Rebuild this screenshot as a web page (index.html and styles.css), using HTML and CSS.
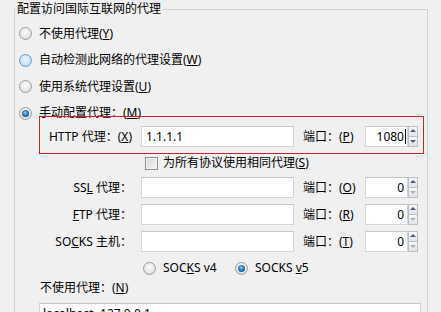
FILE: index.html
```html
<!DOCTYPE html>
<html lang="zh-CN">
<head>
    <meta charset="UTF-8">
    <title>连接设置</title>
    <link rel="stylesheet" href="styles.css">
</head>
<body>
    <fieldset class="group">
        <legend>配置访问国际互联网的代理</legend>

        <div class="modes">
            <label class="opt"><span class="radio"></span><span>不使用代理(<u>Y</u>)</span></label>
            <label class="opt"><span class="radio hot"></span><span>自动检测此网络的代理设置(<u>W</u>)</span></label>
            <label class="opt"><span class="radio"></span><span>使用系统代理设置(<u>U</u>)</span></label>
            <label class="opt"><span class="radio on"></span><span>手动配置代理：(<u>M</u>)</span></label>
        </div>

        <!-- 红框标出的 HTTP 代理 -->
        <div class="proxy-row marked">
            <label class="host-label">HTTP 代理：(<u>X</u>)</label>
            <input class="box host" type="text" value="1.1.1.1">
            <label class="port-label">端口：(<u>P</u>)</label>
            <div class="spin">
                <input class="box port" type="text" value="1080">
                <span class="caret"></span>
                <span class="arrows"><span class="up"></span><span class="down"></span></span>
            </div>
        </div>

        <label class="check-row"><span class="checkbox"></span><span>为所有协议使用相同代理(<u>S</u>)</span></label>

        <div class="servers">
            <div class="proxy-row">
                <label class="host-label">SS<u>L</u> 代理：</label>
                <input class="box host" type="text" value="">
                <label class="port-label">端口：(<u>O</u>)</label>
                <div class="spin">
                    <input class="box port" type="text" value="0">
                    <span class="arrows"><span class="up"></span><span class="down off"></span></span>
                </div>
            </div>
            <div class="proxy-row">
                <label class="host-label"><u>F</u>TP 代理：</label>
                <input class="box host" type="text" value="">
                <label class="port-label">端口：(<u>R</u>)</label>
                <div class="spin">
                    <input class="box port" type="text" value="0">
                    <span class="arrows"><span class="up"></span><span class="down off"></span></span>
                </div>
            </div>
            <div class="proxy-row">
                <label class="host-label">SO<u>C</u>KS 主机：</label>
                <input class="box host" type="text" value="">
                <label class="port-label">端口：(<u>T</u>)</label>
                <div class="spin">
                    <input class="box port" type="text" value="0">
                    <span class="arrows"><span class="up"></span><span class="down off"></span></span>
                </div>
            </div>
        </div>

        <div class="version-row">
            <label class="opt"><span class="radio"></span><span>SOC<u>K</u>S v4</span></label>
            <label class="opt"><span class="radio on"></span><span>SOCKS <u>v</u>5</span></label>
        </div>

        <label class="exceptions-label">不使用代理：(<u>N</u>)</label>
        <textarea class="box exceptions">localhost, 127.0.0.1</textarea>
    </fieldset>
</body>
</html>
```

FILE: styles.css
```css
html, body {
    height: 100%;
    overflow: hidden;
}

body {
    margin: 0;
    background-color: #f0f0f0;
    font-family: "Noto Sans", "Noto Sans CJK SC", sans-serif;
    font-size: 12px;
    line-height: 16px;
    color: #000;
}

.group {
    margin: 1px 0 0 14px;
    width: 414px;
    box-sizing: border-box;
    padding: 0 0 40px 1px;
    border: 1px solid #d3d3d3;
    min-inline-size: 0;
}

.group legend {
    padding: 0 1px;
    line-height: 16px;
}

/* 四个代理模式 */
.modes {
    display: grid;
    row-gap: 10.5px;
    margin: 8.5px 0 0 3px;
}

.opt {
    display: flex;
    align-items: center;
    gap: 7px;
    height: 16px;
    white-space: nowrap;
}

.radio {
    position: relative;
    flex: none;
    width: 13px;
    height: 13px;
    box-sizing: border-box;
    border-radius: 50%;
    border: 1px solid #9d9d9d;
    background: radial-gradient(circle at 50% 40%, #fdfdfd 0, #e8e8e8 55%, #cdcdcd 100%);
}

.radio.hot {
    border-color: #5b9ad1;
    background: radial-gradient(circle at 50% 40%, #f0f8fe 0, #c4e2f9 60%, #9dcdf2 100%);
}

.radio.on::after {
    content: "";
    position: absolute;
    left: 2px;
    top: 2px;
    width: 7px;
    height: 7px;
    border-radius: 50%;
    background: radial-gradient(circle at 45% 40%, #8fd0f4 0, #2a78b4 45%, #0b3b67 100%);
}

/* 地址 + 端口 行 */
.proxy-row {
    display: flex;
    align-items: center;
    width: 378px;
    height: 21px;
    margin-left: 24px;
}

.marked {
    position: relative;
    margin-top: 5px;
}

.marked::after {
    content: "";
    position: absolute;
    top: -10px;
    bottom: -7px;
    left: -1px;
    right: -6px;
    border: 1px solid #cc2229;
    pointer-events: none;
}

.host-label {
    flex: none;
    width: 92px;
    text-align: right;
    white-space: nowrap;
}

.box {
    box-sizing: border-box;
    height: 21px;
    margin: 0;
    padding: 0 4px;
    border: 1px solid #d2d5d9;
    border-top-color: #c3c6cb;
    border-radius: 0;
    background-color: #fff;
    font: inherit;
    color: #000;
    outline: none;
}

.host {
    flex: none;
    width: 153px;
    margin-left: 9px;
}

.port-label {
    flex: none;
    width: 62px;
    margin-left: 9px;
    white-space: nowrap;
}

.spin {
    position: relative;
    display: flex;
    width: 53px;
    height: 21px;
}

.port {
    width: 43px;
    padding-right: 3px;
    text-align: right;
}

.caret {
    position: absolute;
    left: 40px;
    top: 3px;
    width: 1px;
    height: 15px;
    background-color: #000;
}

.arrows {
    display: flex;
    flex-direction: column;
    width: 10px;
}

.arrows span {
    position: relative;
    flex: 1;
    box-sizing: border-box;
    border: 1px solid #bcc0c6;
    background: linear-gradient(#f7f7f7, #e2e3e5);
}

.arrows .down {
    border-top: none;
}

.arrows span::after {
    content: "";
    position: absolute;
    left: 1px;
    width: 0;
    height: 0;
    border-left: 3px solid transparent;
    border-right: 3px solid transparent;
}

.arrows .up::after {
    top: 2px;
    border-bottom: 3px solid #4a5c7c;
}

.arrows .down::after {
    top: 3px;
    border-top: 3px solid #4a5c7c;
}

.arrows .down.off::after {
    border-top-color: #a8b0bc;
}

/* 相同代理复选框 */
.check-row {
    display: flex;
    align-items: center;
    gap: 5px;
    height: 16px;
    margin: 8px 0 0 129px;
}

.checkbox {
    flex: none;
    width: 13px;
    height: 13px;
    box-sizing: border-box;
    border: 1px solid #8f8f8f;
    background: linear-gradient(135deg, #d2d4d8, #f7f7f7);
    box-shadow: inset 0 0 0 1px #f2f2f2;
}

.servers {
    display: grid;
    row-gap: 6px;
    margin-top: 6px;
}

.version-row {
    display: flex;
    height: 16px;
    margin: 8px 0 0 127px;
}

.version-row .opt:first-child {
    width: 92px;
}

.exceptions-label {
    display: block;
    margin: 4px 0 0 24px;
}

.exceptions {
    display: block;
    width: 382px;
    height: 60px;
    margin: 7px 0 0 23px;
    padding: 2px 3px;
    resize: none;
}
```
